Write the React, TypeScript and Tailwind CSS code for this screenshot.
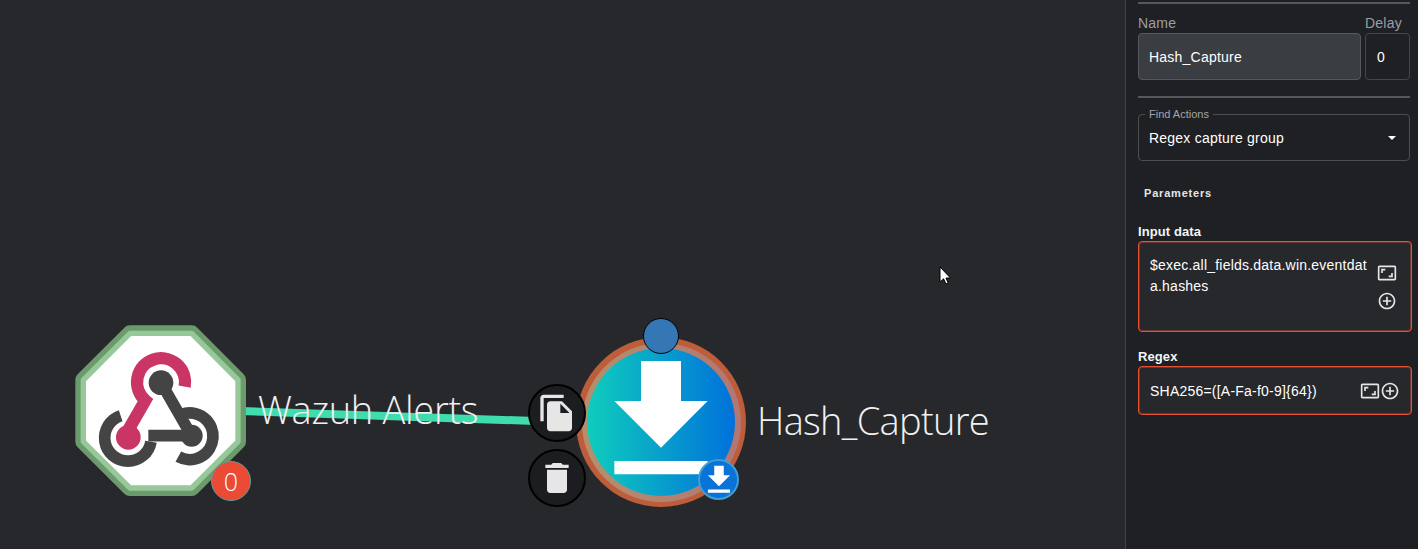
const canvasFont = "font-['Open_Sans',sans-serif] font-light";

const MuiIcon = ({ d, className }: { d: string; className?: string }) => (
  <svg viewBox="0 0 24 24" fill="currentColor" className={className}>
    <path d={d} />
  </svg>
);

const DOWNLOAD = "M5 20h14v-2H5v2zM19 9h-4V3H9v6H5l7 7 7-7z";
const FILE_COPY =
  "M16 1H4c-1.1 0-2 .9-2 2v14h2V3h12V1zm-1 4 6 6v10c0 1.1-.9 2-2 2H7.99C6.89 23 6 22.1 6 21l.01-14c0-1.1.89-2 1.99-2h7zm-1 7h5.5L14 6.5V12z";
const TRASH =
  "M6 19c0 1.1.9 2 2 2h8c1.1 0 2-.9 2-2V7H6v12zM19 4h-3.5l-1-1h-5l-1 1H5v2h14V4z";
const ASPECT =
  "M19 12h-2v3h-3v2h5v-5zM7 9h3V7H5v5h2V9zm14-6H3c-1.1 0-2 .9-2 2v14c0 1.1.9 2 2 2h18c1.1 0 2-.9 2-2V5c0-1.1-.9-2-2-2zm0 16.01H3V4.99h18v14.02z";
const ADD_CIRCLE =
  "M13 7h-2v4H7v2h4v4h2v-4h4v-2h-4V7zm-1-5C6.48 2 2 6.48 2 12s4.48 10 10 10 10-4.48 10-10S17.52 2 12 2zm0 18c-4.41 0-8-3.59-8-8s3.59-8 8-8 8 3.59 8 8-3.59 8-8 8z";

const OCTAGON = "180,40 365,40 504,180 504,365 365,504 180,504 40,365 40,180";

const WebhookNode = () => (
  <div className="absolute left-[70px] top-[320px] h-[190px] w-[190px]">
    <svg viewBox="0 0 570 570" className="h-full w-full">
      <polygon points={OCTAGON} fill="#6b9b6d" stroke="#6b9b6d" strokeWidth="48" strokeLinejoin="round" />
      <polygon points={OCTAGON} fill="#ffffff" stroke="#97c89a" strokeWidth="16" strokeLinejoin="round" />
      <g className="blur-[2px]">
        <g fill="none" stroke="#444444" strokeWidth="35">
          <path d="M152 287 A70 70 0 1 0 243 365" />
          <path d="M235 347 L365 347" />
          <path d="M335 283 A70 70 0 1 1 325 410" />
          <path d="M273 188 L352 325" />
        </g>
        <circle cx="273" cy="188" r="37" fill="#444444" />
        <circle cx="365" cy="347" r="33" fill="#444444" />
        <path
          d="M344 200 A72 72 0 1 0 226 241 L172 335"
          fill="none"
          stroke="#c93565"
          strokeWidth="37"
        />
        <circle cx="175" cy="352" r="37" fill="#c93565" />
      </g>
    </svg>
    <div className="absolute left-[141px] top-[141px] flex h-[40px] w-[40px] items-center justify-center rounded-full border-[1.5px] border-[#64989b] bg-[#eb4a35] text-[25px] leading-none text-white">
      <span className={canvasFont}>0</span>
    </div>
  </div>
);

const CircleAction = ({ top, d }: { top: number; d: string }) => (
  <div
    className="absolute left-[528px] flex h-[58px] w-[58px] items-center justify-center rounded-full border-2 border-black bg-[#1c1d20] text-[#e6e6e6]"
    style={{ top }}
  >
    <MuiIcon d={d} className="h-[40px] w-[40px]" />
  </div>
);

const DownloadNode = () => (
  <>
    <div className="absolute left-[576px] top-[337px] h-[170px] w-[170px] rounded-full bg-[#bd5d3a] p-[5.5px]">
      <div className="h-full w-full rounded-full bg-[linear-gradient(to_right,#b5906c,#b27674)] p-[5.5px]">
        <div className="flex h-full w-full items-center justify-center rounded-full bg-[linear-gradient(to_right,#0fcdbd,#0071db)] text-white">
          <MuiIcon d={DOWNLOAD} className="mb-[2px] h-[160px] w-[160px] shrink-0" />
        </div>
      </div>
    </div>
    <div className="absolute left-[643px] top-[318px] h-[36px] w-[36px] rounded-full border-[1.5px] border-black bg-[#3577b5]" />
    <CircleAction top={384} d={FILE_COPY} />
    <CircleAction top={449} d={TRASH} />
    <div className="absolute left-[698px] top-[459px] flex h-[41px] w-[41px] items-center justify-center rounded-full border-2 border-[#3f9fd2] bg-[#0a73d9] text-white">
      <MuiIcon d={DOWNLOAD} className="h-[38px] w-[38px] shrink-0" />
    </div>
  </>
);

const Canvas = () => (
  <div className="relative flex-1 overflow-hidden">
    <svg className="absolute left-0 top-0 h-full w-full">
      <line x1="240" y1="411" x2="535" y2="421" stroke="#3fdcae" strokeWidth="8" />
    </svg>
    <WebhookNode />
    <DownloadNode />
    <span className={`absolute left-[258px] top-[381px] text-[38px] leading-[56px] tracking-[-0.3px] whitespace-nowrap text-[#f0f0f0] ${canvasFont}`}>
      Wazuh Alerts
    </span>
    <span className={`absolute left-[757px] top-[392px] text-[38px] leading-[56px] tracking-[-0.7px] whitespace-nowrap text-[#f0f0f0] ${canvasFont}`}>
      Hash_Capture
    </span>
    <svg viewBox="0 0 12 19" className="absolute left-[939px] top-[266px] h-[19px] w-[12px]">
      <path
        d="M1 1 L1 16 L4.6 12.8 L7 18 L9.2 17 L7 12 L11.5 12 Z"
        fill="#ffffff"
        stroke="#000000"
        strokeWidth="1"
      />
    </svg>
  </div>
);

const Divider = () => <div className="h-[2px] w-[272px] bg-[#55575b]" />;

const SidePanel = () => (
  <div className="flex w-[293px] flex-col border-l border-[#3f4044] bg-[#1f2023] pl-3 font-['Liberation_Sans',sans-serif] text-sm tracking-[0.22px]">
    <div className="mt-[2px]">
      <Divider />
    </div>
    <div className="mt-[11px] flex gap-1">
      <div className="w-[223px]">
        <div className="h-[17px] leading-[17px] text-[#9b9fa5]">Name</div>
        <div className="mt-[1px] flex h-[47px] items-center rounded border border-[#55585c] bg-[#3a3d42] pl-[10px] text-white">
          Hash_Capture
        </div>
      </div>
      <div className="w-[45px]">
        <div className="h-[17px] leading-[17px] whitespace-nowrap text-[#9b9fa5]">Delay</div>
        <div className="mt-[1px] flex h-[47px] items-center rounded border border-[#44464a] pl-[11px] text-white">
          0
        </div>
      </div>
    </div>
    <div className="mt-[16px]">
      <Divider />
    </div>
    <div className="relative mt-[16px] flex h-[47px] w-[272px] items-center justify-between rounded border border-[#4b4d51] pl-[10px] pr-[13px] text-white">
      <span>Regex capture group</span>
      <div className="h-0 w-0 border-x-[4px] border-t-[4px] border-x-transparent border-t-white" />
      <span className="absolute -top-[7px] left-[6px] bg-[#1f2023] px-1 text-[11px] leading-[12px] tracking-normal text-[#a3a5a9]">
        Find Actions
      </span>
    </div>
    <div className="mt-[26px] pl-[6px] text-[11px] leading-[13px] font-bold tracking-[0.8px] text-[#e4e6e9]">
      Parameters
    </div>
    <div className="mt-[24px] text-[13px] leading-[15px] font-bold tracking-[0.1px] text-[#f2f4f6]">Input data</div>
    <div className="mt-[2px] flex h-[91px] w-[274px] rounded border border-[#e8502f] bg-[#27282c] pl-[11px] text-white shadow-[inset_0_0_0_1px_rgba(224,73,47,0.4)]">
      <div className="mt-[13px] w-[218px] leading-[21px] break-all">
        $exec.all_fields.data.win.eventdata.hashes
      </div>
      <div className="ml-[9px] flex flex-col items-center pt-[21px] text-[#e6e6e6]">
        <MuiIcon d={ASPECT} className="h-[20px] w-[20px]" />
        <MuiIcon d={ADD_CIRCLE} className="mt-[8px] h-[20px] w-[20px]" />
      </div>
    </div>
    <div className="mt-[17px] text-[13px] leading-[15px] font-bold tracking-[0.1px] text-[#f2f4f6]">Regex</div>
    <div className="mt-[2px] flex h-[49px] w-[274px] items-center justify-between rounded border border-[#e8502f] bg-[#27282c] pl-[11px] pr-[11px] text-white shadow-[inset_0_0_0_1px_rgba(224,73,47,0.4)]">
      <span>SHA256=([A-Fa-f0-9]{"{64}"})</span>
      <div className="flex items-center text-[#e6e6e6]">
        <MuiIcon d={ASPECT} className="h-[20px] w-[20px]" />
        <MuiIcon d={ADD_CIRCLE} className="h-[20px] w-[20px]" />
      </div>
    </div>
  </div>
);

export default function App() {
  return (
    <div className="flex h-[549px] w-[1418px] overflow-hidden bg-[#27282c]">
      <Canvas />
      <SidePanel />
    </div>
  );
}
